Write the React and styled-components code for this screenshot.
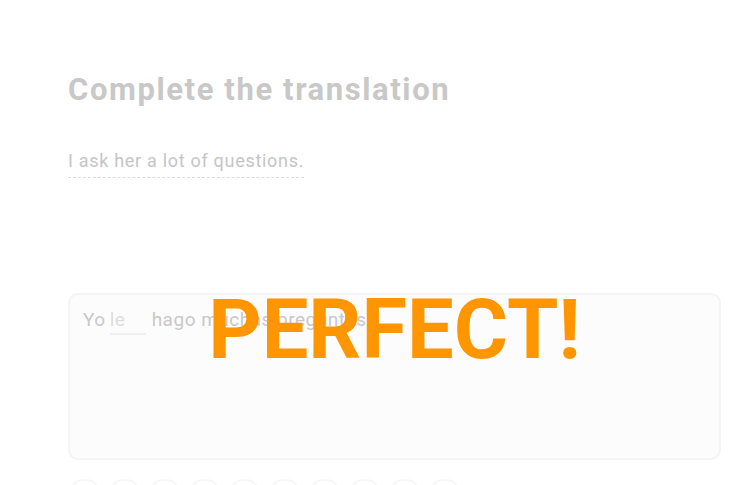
import React from 'react';
import styled, { createGlobalStyle } from 'styled-components';

const GlobalStyle = createGlobalStyle`
  body {
    margin: 0;
    background: #ffffff;
    font-family: Roboto, "Liberation Sans", sans-serif;
    overflow: hidden;
  }
`;

const Page = styled.div`
  position: relative;
  width: 746px;
  height: 485px;
  overflow: hidden;
  padding: 70px 25px 0 68px;
  box-sizing: border-box;
  display: flex;
  flex-direction: column;
  align-items: flex-start;
  & > * {
    flex-shrink: 0;
  }
`;

const Title = styled.h1`
  margin: 0;
  font-size: 31px;
  font-weight: 700;
  letter-spacing: 1.6px;
  color: #c8c8c8;
  line-height: 40px;
`;

const Prompt = styled.div`
  margin-top: 40px;
  font-size: 18px;
  letter-spacing: 0.7px;
  color: #c5c5c9;
  padding-bottom: 6px;
  border-bottom: 1px dashed #dcdcdc;
`;

const Answer = styled.div`
  align-self: stretch;
  margin-top: 115px;
  height: 167px;
  box-sizing: border-box;
  background: #fcfcfc;
  border: 2px solid #f4f4f4;
  border-radius: 10px;
  padding: 13px 13px;
  font-size: 19px;
  letter-spacing: 0.5px;
  color: #c8c8cc;
  display: flex;
  align-items: flex-start;
  gap: 4px;
`;

const Blank = styled.span`
  display: inline-block;
  width: 36px;
  padding-bottom: 2px;
  border-bottom: 2px solid #efeff0;
  color: #dcdce0;
  margin-right: 2px;
`;

const WordBank = styled.div`
  display: flex;
  gap: 9px;
  margin-top: 19px;
  padding-left: 1px;
`;

const Pill = styled.div`
  width: 31px;
  height: 34px;
  box-sizing: border-box;
  border: 2px solid #f7f7f7;
  border-radius: 14px;
`;

const Perfect = styled.div`
  position: absolute;
  left: 68px;
  right: 25px;
  top: 280px;
  text-align: center;
  font-family: Roboto, "Liberation Sans", sans-serif;
  font-weight: 700;
  font-size: 83px;
  line-height: 100px;
  color: #ff9600;
`;

export default function App() {
  return (
    <>
      <GlobalStyle />
      <Page>
        <Title>Complete the translation</Title>
        <Prompt>I ask her a lot of questions.</Prompt>
        <Answer>
          <span>Yo</span>
          <Blank>le</Blank>
          <span>hago muchas preguntas.</span>
        </Answer>
        <WordBank>
          {Array.from({ length: 10 }).map((_, i) => (
            <Pill key={i} />
          ))}
        </WordBank>
        <Perfect>PERFECT!</Perfect>
      </Page>
    </>
  );
}
